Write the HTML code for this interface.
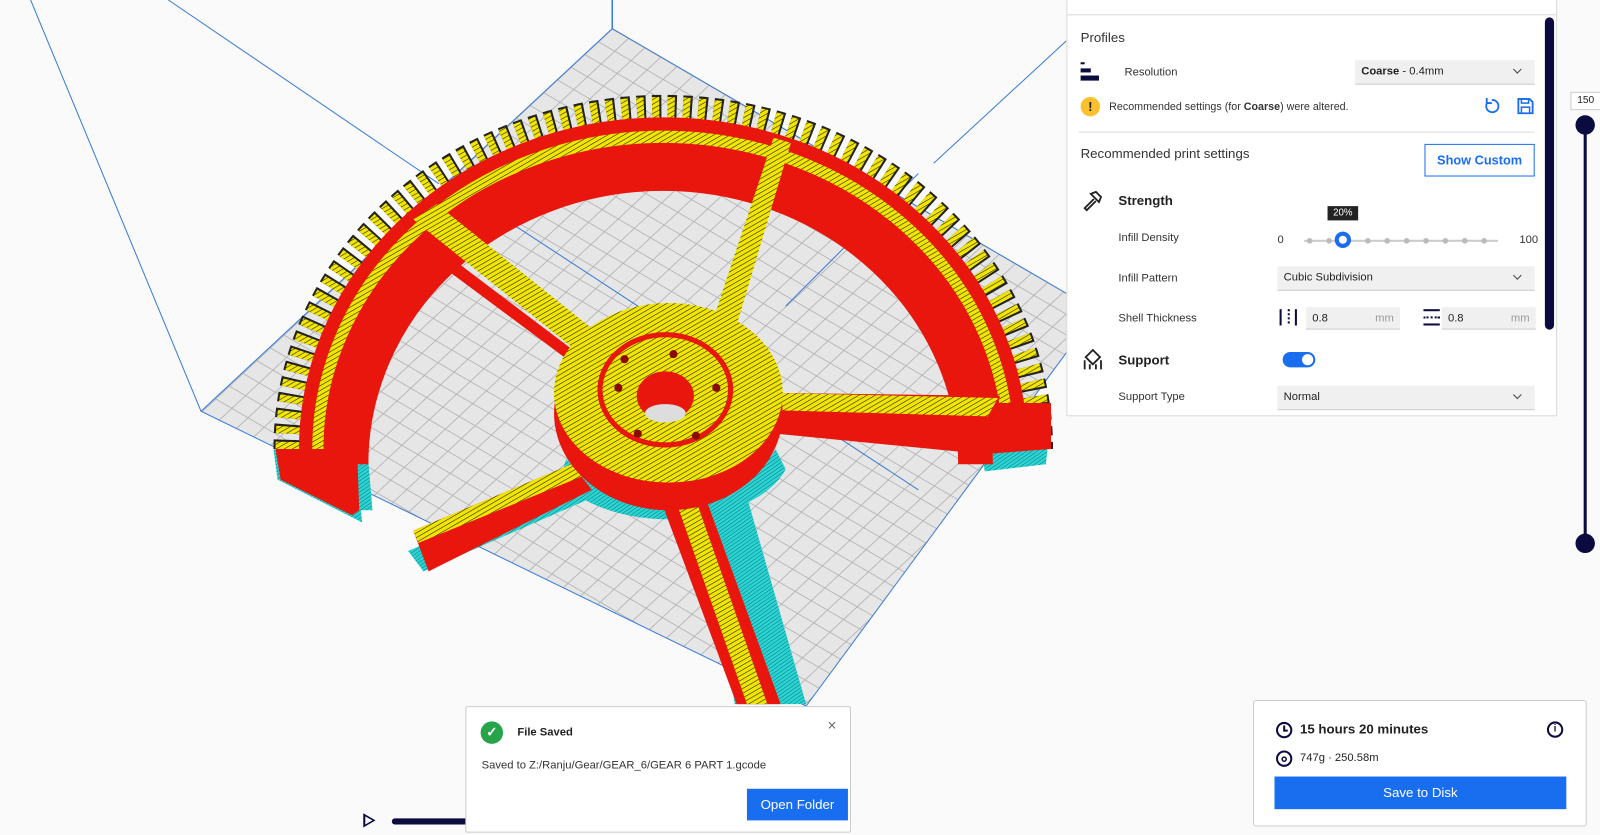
<!DOCTYPE html>
<html><head><meta charset="utf-8"><style>
*{box-sizing:border-box;margin:0;padding:0}
body{width:1600px;height:835px;overflow:hidden;background:#fafafa;font-family:"Liberation Sans",sans-serif;color:#222}
#w{position:absolute;left:0;top:0;width:1568px;height:818px;transform:scale(1.0204);transform-origin:0 0}
.abs{position:absolute}
.panel{left:1045px;top:-2px;width:481px;height:410px;background:#fff;border:1px solid #d8d8d8}
.lbl{font-size:11px;color:#333}
.dd{background:#f0f0f0;border-bottom:1px solid #ccc;height:24px;font-size:11px;padding:5px 6px;color:#222}
.chev{position:absolute;right:14px;top:6px;width:6px;height:6px;border-right:1.2px solid #444;border-bottom:1.2px solid #444;transform:rotate(45deg)}
</style></head><body><div id="w">
<svg class="abs" style="left:0;top:0" width="1568" height="818">
<defs>
<pattern id="g" width="10" height="10" patternUnits="userSpaceOnUse" patternTransform="matrix(-1.34 1.25 1.58 0.92 600 28)">
<rect width="10" height="10" fill="#e6e6e6"/><path d="M0 0H10M0 0V10" stroke="#b0b0b0" stroke-width="0.9" fill="none"/>
</pattern>
<pattern id="h" width="4" height="4" patternUnits="userSpaceOnUse" patternTransform="rotate(-30)">
<rect width="4" height="4" fill="#f2e600"/><path d="M0 0H4" stroke="#1a1a00" stroke-width="1.1"/>
</pattern>
<pattern id="c" width="3" height="3" patternUnits="userSpaceOnUse" patternTransform="rotate(-35)">
<rect width="3" height="3" fill="#2ad4d4"/><path d="M0 0H3" stroke="#0a6060" stroke-width="0.8"/>
</pattern>
</defs>
<line x1="30" y1="0" x2="197" y2="403" stroke="#3a7bd5"/>
<line x1="165" y1="0" x2="430" y2="180" stroke="#3a7bd5"/>
<line x1="1045" y1="40" x2="915" y2="160" stroke="#3a7bd5"/>
<line x1="600" y1="0" x2="600" y2="28" stroke="#3a7bd5" stroke-width="1.5"/>
<polygon points="600,28 1075,305 790,692 197,403" fill="url(#g)" stroke="#3a7bd5"/>
<line x1="480" y1="205" x2="900" y2="480" stroke="#3a7bd5"/>
<line x1="900" y1="170" x2="770" y2="300" stroke="#3a7bd5"/>
<!-- cyan skirts -->
<path d="M268 440 L272 470 L355 512 L350 470 Z" fill="url(#c)"/>
<path d="M348 290 A330 300 0 0 0 330 440 L350 500 L365 500 L360 440 A300 265 0 0 1 380 300 Z" fill="url(#c)"/>
<path d="M960 420 L1030 405 L1025 455 L965 462 Z" fill="url(#c)"/>
<path d="M400 540 L560 470 L575 490 L415 560 Z" fill="url(#c)"/>
<path d="M690 480 L730 480 L790 690 L720 690 Z" fill="url(#c)"/>
<path d="M555 450 A110 60 0 0 0 760 440 L770 460 A120 70 0 0 1 548 470 Z" fill="url(#c)"/>
<!-- ring -->
<path d="M282 440 A368 333 0 0 1 1018 440" fill="none" stroke="#222" stroke-width="28" stroke-dasharray="9 6"/>
<path d="M282 440 A368 333 0 0 1 1018 440" fill="none" stroke="url(#h)" stroke-width="24" stroke-dasharray="7 8"/>
<path d="M300 440 A350 318 0 0 1 1000 440" fill="none" stroke="#e8160c" stroke-width="14"/>
<path d="M312 440 A338 306 0 0 1 988 440" fill="none" stroke="url(#h)" stroke-width="12"/>
<path d="M325 440 A325 292 0 0 1 975 440" fill="none" stroke="#e8160c" stroke-width="16"/>
<path d="M336 440 A314 280 0 0 1 964 440" fill="none" stroke="url(#h)" stroke-width="6"/>
<path d="M344 455 A306 285 0 0 1 956 455" fill="none" stroke="#e8160c" stroke-width="34"/>
<path d="M270 440 L350 440 L352 500 L345 505 L275 470 Z" fill="#e8160c"/>
<path d="M960 395 L1030 395 L1030 440 L965 445 Z" fill="#e8160c"/>
<!-- spokes -->
<polygon points="405,215 428,200 615,350 600,372" fill="url(#h)"/>
<polygon points="412,230 600,372 600,385 405,240" fill="#e8160c"/>
<polygon points="758,135 775,140 722,318 700,310" fill="url(#h)"/>
<polygon points="700,310 722,318 715,330 695,322" fill="#e8160c"/>
<polygon points="760,385 980,388 965,445 760,425" fill="#e8160c"/>
<polygon points="760,385 978,390 968,408 760,402" fill="url(#h)"/>
<polygon points="405,520 560,455 580,480 420,560" fill="#e8160c"/>
<polygon points="405,520 560,455 570,467 410,532" fill="url(#h)"/>
<polygon points="640,470 685,470 765,690 722,690" fill="#e8160c"/>
<polygon points="655,470 675,470 752,690 732,690" fill="url(#h)"/>
<!-- hub -->
<ellipse cx="655" cy="405" rx="112" ry="95" fill="#e8160c"/>
<ellipse cx="655" cy="385" rx="112" ry="88" fill="url(#h)"/>
<ellipse cx="652" cy="382" rx="64" ry="54" fill="none" stroke="#e8160c" stroke-width="5"/>
<ellipse cx="652" cy="388" rx="28" ry="24" fill="#e8160c"/>
<ellipse cx="652" cy="405" rx="20" ry="9" fill="#ddd"/>
<g fill="#8a0a05"><circle cx="612" cy="352" r="4"/><circle cx="660" cy="347" r="4"/><circle cx="702" cy="380" r="4"/><circle cx="682" cy="427" r="4"/><circle cx="625" cy="425" r="4"/><circle cx="606" cy="380" r="4"/></g>
</svg>

<div class="abs panel">
 <div class="abs" style="left:0;top:15px;width:479px;height:1px;background:#d8d8d8"></div>
 <div class="abs" style="left:13px;top:30px;font-size:13px;color:#333">Profiles</div>
 <div class="abs" style="left:13px;top:62px;width:18px;height:18px">
  <div class="abs" style="left:0;top:0;width:4px;height:2px;background:#0b0b40"></div>
  <div class="abs" style="left:0;top:6px;width:10px;height:4px;background:#0b0b40"></div>
  <div class="abs" style="left:0;top:13px;width:18px;height:5px;background:#0b0b40"></div></div>
 <div class="abs lbl" style="left:56px;top:66px">Resolution</div>
 <div class="abs dd" style="left:282px;top:60px;width:176px"><b>Coarse</b> - 0.4mm<span class="chev"></span></div>
 <div class="abs" style="left:13px;top:96px;width:19px;height:19px;border-radius:50%;background:#fbc02d;font-size:13px;font-weight:bold;text-align:center;line-height:19px">!</div>
 <div class="abs lbl" style="left:41px;top:100px;font-size:10.5px">Recommended settings (for <b>Coarse</b>) were altered.</div>
 <svg class="abs" style="left:407px;top:96px" width="18" height="18" viewBox="0 0 18 18"><path d="M5 5 A6 6 0 1 0 9 3" fill="none" stroke="#196ef0" stroke-width="1.8"/><path d="M4 1 V6 H9" fill="none" stroke="#196ef0" stroke-width="1.8"/></svg>
 <svg class="abs" style="left:440px;top:96px" width="18" height="18" viewBox="0 0 18 18"><path d="M2 2 H13 L16 5 V16 H2 Z" fill="none" stroke="#196ef0" stroke-width="1.8"/><rect x="5" y="2" width="7" height="4" fill="none" stroke="#196ef0" stroke-width="1.5"/><rect x="5" y="10" width="8" height="6" fill="none" stroke="#196ef0" stroke-width="1.5"/></svg>
 <div class="abs" style="left:11px;top:130px;width:447px;height:1px;background:#ddd"></div>
 <div class="abs" style="left:13px;top:144px;font-size:13px;color:#333">Recommended print settings</div>
 <div class="abs" style="left:350px;top:142px;width:108px;height:32px;border:1px solid #196ef0;color:#196ef0;font-size:12.5px;font-weight:bold;text-align:center;line-height:30px">Show Custom</div>
 <svg class="abs" style="left:14px;top:187px" width="22" height="22" viewBox="0 0 22 22"><path d="M9 4 L14 2 L19 7 L17 12 Z" fill="none" stroke="#222" stroke-width="1.8"/><path d="M12 9 L3 18 L5 20 L14 11" fill="none" stroke="#222" stroke-width="1.8"/></svg>
 <div class="abs" style="left:50px;top:190px;font-size:13px;font-weight:bold;color:#222">Strength</div>
 <div class="abs" style="left:255px;top:203px;width:30px;height:14px;background:#222;color:#fff;font-size:9.5px;text-align:center;line-height:14px">20%</div>
 <div class="abs lbl" style="left:50px;top:228px">Infill Density</div>
 <div class="abs lbl" style="left:206px;top:230px">0</div>
 <div class="abs" style="left:232px;top:236px;width:190px;height:2px;background:#ccc"></div>
 <div class="abs" style="left:228px;top:234px;width:190px;height:6px;background:radial-gradient(circle,#bbb 2.5px,transparent 3px) 0 0/19px 6px"></div>
 <div class="abs" style="left:262px;top:228px;width:16px;height:16px;border-radius:50%;background:#196ef0;border:4px solid #196ef0"><div style="width:8px;height:8px;border-radius:50%;background:#fff;margin:0 auto"></div></div>
 <div class="abs lbl" style="left:443px;top:230px">100</div>
 <div class="abs lbl" style="left:50px;top:268px">Infill Pattern</div>
 <div class="abs dd" style="left:206px;top:262px;width:252px">Cubic Subdivision<span class="chev"></span></div>
 <div class="abs lbl" style="left:50px;top:307px">Shell Thickness</div>
 <div class="abs" style="left:208px;top:304px;width:17px;height:16px;border-left:2px solid #0b0b40;border-right:2px solid #0b0b40"><div style="margin:0 auto;width:0;height:14px;border-left:2px dotted #0b0b40"></div></div>
 <div class="abs dd" style="left:234px;top:302px;width:92px;height:22px">0.8<span style="position:absolute;right:6px;color:#999">mm</span></div>
 <div class="abs" style="left:349px;top:304px;width:16px;height:16px;border-top:2px solid #0b0b40;border-bottom:2px solid #0b0b40"><div style="margin-top:5px;border-top:2px dotted #0b0b40"></div></div>
 <div class="abs dd" style="left:367px;top:302px;width:92px;height:22px">0.8<span style="position:absolute;right:6px;color:#999">mm</span></div>
 <svg class="abs" style="left:14px;top:342px" width="22" height="22" viewBox="0 0 22 22"><path d="M11 2 L18 9 L11 16 L4 9 Z" fill="none" stroke="#222" stroke-width="1.8"/><path d="M3 12 V21 M8 16 V21 M14 16 V21 M19 12 V21" stroke="#222" stroke-width="1.8"/></svg>
 <div class="abs" style="left:50px;top:346px;font-size:13px;font-weight:bold;color:#222">Support</div>
 <div class="abs" style="left:211px;top:346px;width:32px;height:15px;border-radius:8px;background:#196ef0"><div style="position:absolute;right:2px;top:2px;width:11px;height:11px;border-radius:50%;background:#fff"></div></div>
 <div class="abs lbl" style="left:50px;top:384px">Support Type</div>
 <div class="abs dd" style="left:206px;top:379px;width:252px">Normal<span class="chev"></span></div>
 <div class="abs" style="left:468px;top:18px;width:9px;height:306px;border-radius:5px;background:#0b0b40"></div>
</div>
<div class="abs" style="left:1539px;top:90px;width:30px;height:18px;background:#fff;border:1px solid #ccc;font-size:10px;text-align:center;line-height:16px">150</div>
<div class="abs" style="left:1552px;top:122px;width:3px;height:412px;background:#0b0b40"></div>
<div class="abs" style="left:1544px;top:113px;width:19px;height:19px;border-radius:50%;background:#0b0b40"></div>
<div class="abs" style="left:1544px;top:523px;width:19px;height:19px;border-radius:50%;background:#0b0b40"></div>
<div class="abs" style="left:356px;top:797px;width:0;height:0;border-left:12px solid #0b0b40;border-top:7px solid transparent;border-bottom:7px solid transparent"></div>
<div class="abs" style="left:358px;top:800px;width:0;height:0;border-left:7px solid #fafafa;border-top:4px solid transparent;border-bottom:4px solid transparent"></div>
<div class="abs" style="left:384px;top:802px;width:80px;height:6px;border-radius:3px;background:#0b0b40"></div>
<div class="abs" style="left:456px;top:692px;width:378px;height:124px;background:#fff;border:1px solid #ccc;border-radius:2px">
 <div class="abs" style="left:14px;top:14px;width:22px;height:22px;border-radius:50%;background:#27a34a;color:#fff;font-size:13px;text-align:center;line-height:22px;font-weight:bold">✓</div>
 <div class="abs" style="left:50px;top:19px;font-size:11px;color:#222;font-weight:bold">File Saved</div>
 <div class="abs" style="left:354px;top:10px;font-size:15px;color:#666">×</div>
 <div class="abs" style="left:15px;top:51px;font-size:11px;color:#333">Saved to Z:/Ranju/Gear/GEAR_6/GEAR 6 PART 1.gcode</div>
 <div class="abs" style="left:275px;top:80px;width:99px;height:31px;background:#196ef0;color:#fff;font-size:13px;text-align:center;line-height:31px">Open Folder</div>
</div>
<div class="abs" style="left:1228px;top:686px;width:327px;height:124px;background:#fff;border:1px solid #ccc;border-radius:3px">
 <svg class="abs" style="left:21px;top:20px" width="17" height="17" viewBox="0 0 17 17"><circle cx="8.5" cy="8.5" r="7" fill="none" stroke="#0b0b40" stroke-width="2"/><path d="M8.5 4 V9 H12" fill="none" stroke="#0b0b40" stroke-width="2"/></svg>
 <div class="abs" style="left:45px;top:20px;font-size:13px;font-weight:bold;color:#222">15 hours 20 minutes</div>
 <div class="abs" style="left:287px;top:20px;width:16px;height:16px;border:2px solid #0b0b40;border-radius:50%;font-size:10px;text-align:center;line-height:12px;font-weight:bold">i</div>
 <svg class="abs" style="left:21px;top:48px" width="17" height="17" viewBox="0 0 17 17"><circle cx="8.5" cy="8.5" r="7" fill="none" stroke="#0b0b40" stroke-width="2"/><circle cx="8.5" cy="9" r="2" fill="none" stroke="#0b0b40" stroke-width="1.5"/></svg>
 <div class="abs" style="left:45px;top:50px;font-size:11px;color:#222">747g · 250.58m</div>
 <div class="abs" style="left:20px;top:74px;width:286px;height:32px;background:#196ef0;color:#fff;font-size:13px;text-align:center;line-height:32px">Save to Disk</div>
</div>
</div></body></html>
